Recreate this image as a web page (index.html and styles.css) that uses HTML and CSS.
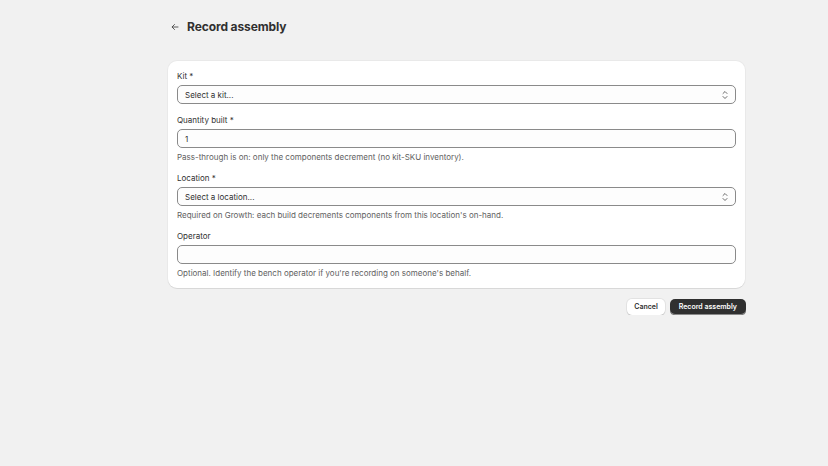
FILE: index.html
```html
<!DOCTYPE html>
<html lang="en">
<head>
    <meta charset="UTF-8">
    <title>Record assembly</title>
    <link rel="stylesheet" href="styles.css">
</head>
<body>
    <div class="page">
        <div class="page-header">
            <a href="#" class="back-btn" aria-label="Back">
                <svg width="10" height="10" viewBox="0 0 20 20"><path d="M16 10H4.5M9 5l-5 5 5 5" fill="none" stroke="#4a4a4a" stroke-width="1.8" stroke-linecap="round" stroke-linejoin="round"/></svg>
            </a>
            <h1 class="page-title">Record assembly</h1>
        </div>

        <div class="card">
            <div class="field">
                <label class="field-label">Kit *</label>
                <div class="select">
                    <span>Select a kit...</span>
                    <svg class="chevrons" width="8" height="10" viewBox="0 0 8 10"><path d="M2 3.5L4 1.5 6 3.5M2 6.5L4 8.5 6 6.5" fill="none" stroke="#6b6b6b" stroke-width="1" stroke-linecap="round" stroke-linejoin="round"/></svg>
                </div>
            </div>

            <div class="field">
                <label class="field-label">Quantity built *</label>
                <div class="input">1</div>
                <div class="help">Pass-through is on: only the components decrement (no kit-SKU inventory).</div>
            </div>

            <div class="field">
                <label class="field-label">Location *</label>
                <div class="select">
                    <span>Select a location...</span>
                    <svg class="chevrons" width="8" height="10" viewBox="0 0 8 10"><path d="M2 3.5L4 1.5 6 3.5M2 6.5L4 8.5 6 6.5" fill="none" stroke="#6b6b6b" stroke-width="1" stroke-linecap="round" stroke-linejoin="round"/></svg>
                </div>
                <div class="help">Required on Growth: each build decrements components from this location's on-hand.</div>
            </div>

            <div class="field">
                <label class="field-label">Operator</label>
                <div class="input"></div>
                <div class="help">Optional. Identify the bench operator if you're recording on someone's behalf.</div>
            </div>
        </div>

        <div class="actions">
            <a href="#" class="btn">Cancel</a>
            <a href="#" class="btn btn-primary">Record assembly</a>
        </div>
    </div>
</body>
</html>
```

FILE: styles.css
```css
* {
    box-sizing: border-box;
    margin: 0;
    padding: 0;
}

body {
    font-family: Inter, "Noto Sans", sans-serif;
    background: #f1f1f1;
    color: #303030;
    font-size: 8px;
    line-height: 10px;
}

.page {
    width: 578px;
    margin-left: 168px;
    padding-top: 17px;
}

.page-header {
    display: flex;
    align-items: center;
    gap: 5px;
    height: 20px;
    margin-bottom: 24px;
}

.back-btn {
    display: flex;
    align-items: center;
    justify-content: center;
    width: 14px;
    height: 14px;
}

.page-title {
    font-size: 12px;
    font-weight: 700;
    letter-spacing: -0.1px;
    color: #303030;
}

.card {
    background: #fff;
    border-radius: 9px;
    padding: 10px 9px 10px;
    display: flex;
    flex-direction: column;
    gap: 11px;
    box-shadow: 0 1px 0 rgba(0, 0, 0, 0.07), 0 0 0 1px rgba(0, 0, 0, 0.03);
    margin-right: 1px;
}

.field {
    display: flex;
    flex-direction: column;
}

.field-label {
    margin-bottom: 4px;
}

.select,
.input {
    height: 19px;
    border: 1px solid #8a8a8a;
    border-radius: 5px;
    background: #fdfdfd;
    padding: 0 7px;
    display: flex;
    align-items: center;
    color: #303030;
}

.select {
    justify-content: space-between;
}

.chevrons {
    margin-right: -1px;
}

.help {
    color: #616161;
    margin-top: 4px;
}

.actions {
    display: flex;
    justify-content: flex-end;
    gap: 5px;
    margin-top: 11px;
}

.btn {
    height: 16px;
    padding: 0 7px;
    border-radius: 5px;
    display: flex;
    align-items: center;
    text-decoration: none;
    font-size: 7px;
    font-weight: 600;
    color: #303030;
    background: #fff;
    box-shadow: 0 1px 0 rgba(0, 0, 0, 0.12), 0 0 0 1px rgba(0, 0, 0, 0.06);
}

.btn-primary {
    padding: 0 9px;
    background: #303030;
    color: #fff;
    box-shadow: inset 0 -1px 0 #8a8a8a, 0 1px 0 rgba(0, 0, 0, 0.2);
}
```
